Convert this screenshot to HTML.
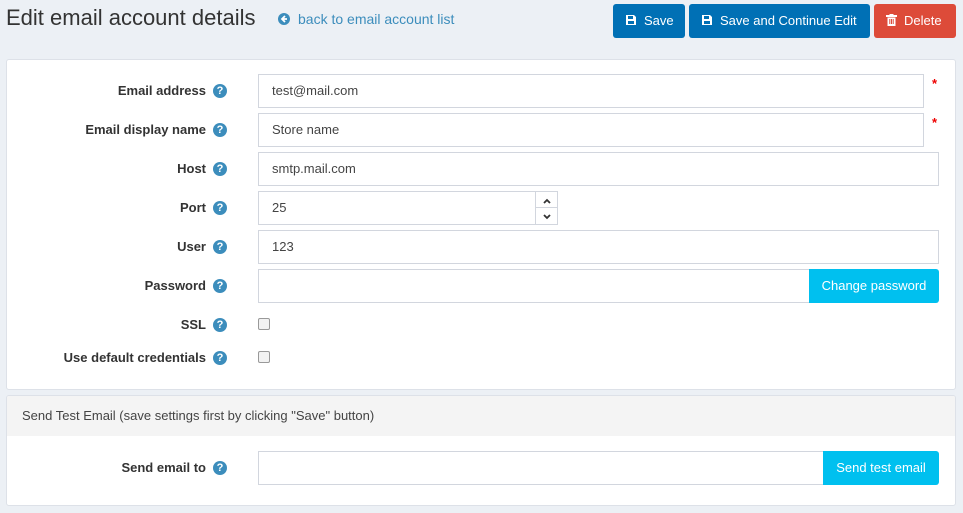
<!DOCTYPE html>
<html><head><meta charset="utf-8"><style>
*{box-sizing:border-box}
body{margin:0;width:963px;height:513px;background:#ecf0f5;font-family:"Liberation Sans",sans-serif;color:#333;position:relative;overflow:hidden}
.abs{position:absolute}
.title{left:6px;top:5px;font-size:22px;color:#333;white-space:nowrap}
.back{left:278px;top:11px;font-size:14px;color:#3c8dbc;white-space:nowrap}
.back .ic{display:inline-block;width:12px;height:12px;border-radius:50%;background:#3c8dbc;vertical-align:-1px;margin-right:8px;position:relative}
.btn{top:4px;height:34px;border-radius:3px;color:#fff;font-size:13px;line-height:34px;white-space:nowrap;padding-left:12px}
.blue{background:#0070b5}
.red{background:#dd4b39}
.panel{background:#fff;border-radius:3px;border:1px solid #dde1e8}
.lbl{right:757px;font-size:13px;font-weight:bold;color:#333;text-align:right;white-space:nowrap;line-height:16px}
.help{left:213px;width:14px;height:14px;border-radius:50%;background:#3c8dbc;color:#fff;font-size:11px;font-weight:bold;text-align:center;line-height:14px}
.inp{left:258px;height:34px;border:1px solid #d2d6de;background:#fff;font-size:13px;line-height:32px;padding-left:13px;color:#444}
.star{left:932px;color:#e00;font-size:13px;font-weight:bold}
.cb{left:258px;width:12px;height:12px;border:1px solid #999;border-radius:2px;background:#f2f2f2}
.cyan{background:#00c0ef;color:#fff;font-size:13px;text-align:center;line-height:34px;height:34px;border-radius:0 3px 3px 0}
</style></head><body>
<div class="abs title">Edit email account details</div>
<div class="abs back"><span class="ic"><svg width="12" height="12" viewBox="0 0 12 12" style="position:absolute;left:0;top:0"><path d="M7 3 L4 6 L7 9 M4 6 H9" stroke="#fff" stroke-width="1.8" fill="none"/></svg></span>back to email account list</div>
<div class="abs btn blue" style="left:613px;width:72px"><svg width="12" height="12" viewBox="0 0 12 12" style="vertical-align:-1px;margin-right:7px"><path d="M1 1H9L11 3V11H1Z" fill="#fff"/><rect x="3" y="2" width="5" height="3" fill="#0070b5"/><rect x="3" y="7" width="6" height="3" fill="#0070b5"/></svg>Save</div>
<div class="abs btn blue" style="left:689px;width:181px"><svg width="12" height="12" viewBox="0 0 12 12" style="vertical-align:-1px;margin-right:7px"><path d="M1 1H9L11 3V11H1Z" fill="#fff"/><rect x="3" y="2" width="5" height="3" fill="#0070b5"/><rect x="3" y="7" width="6" height="3" fill="#0070b5"/></svg>Save and Continue Edit</div>
<div class="abs btn red" style="left:874px;width:82px"><svg width="11" height="12" viewBox="0 0 11 12" style="vertical-align:-1px;margin-right:7px"><rect x="0" y="1" width="11" height="2" fill="#fff"/><rect x="3.5" y="0" width="4" height="2" fill="#fff"/><path d="M1.5 3.5H9.5V12H1.5Z" fill="#fff"/><rect x="3.3" y="5" width="1" height="5" fill="#dd4b39"/><rect x="5" y="5" width="1" height="5" fill="#dd4b39"/><rect x="6.7" y="5" width="1" height="5" fill="#dd4b39"/></svg>Delete</div>

<div class="abs panel" style="left:6px;top:59px;width:950px;height:331px"></div>
<div class="abs panel" style="left:6px;top:395px;width:950px;height:111px;overflow:hidden"><div style="background:#f4f4f4;height:40px;font-size:13px;line-height:40px;padding-left:15px;color:#444">Send Test Email (save settings first by clicking "Save" button)</div></div>

<div class="abs lbl" style="top:83px">Email address</div><div class="abs help" style="top:84px">?</div>
<div class="abs inp" style="top:74px;width:666px">test@mail.com</div><div class="abs star" style="top:76px">*</div>
<div class="abs lbl" style="top:122px">Email display name</div><div class="abs help" style="top:123px">?</div>
<div class="abs inp" style="top:113px;width:666px">Store name</div><div class="abs star" style="top:115px">*</div>
<div class="abs lbl" style="top:161px">Host</div><div class="abs help" style="top:162px">?</div>
<div class="abs inp" style="top:152px;width:681px">smtp.mail.com</div>
<div class="abs lbl" style="top:200px">Port</div><div class="abs help" style="top:201px">?</div>
<div class="abs inp" style="top:191px;width:278px">25</div>
<div class="abs" style="left:535px;top:191px;width:23px;height:34px;border:1px solid #d2d6de;background:#fff"><div style="height:16px;border-bottom:1px solid #d2d6de;text-align:center"><svg width="10" height="8" viewBox="0 0 10 8"><path d="M2 6L5 3L8 6" stroke="#333" stroke-width="1.8" fill="none"/></svg></div><div style="text-align:center"><svg width="10" height="8" viewBox="0 0 10 8"><path d="M2 2L5 5L8 2" stroke="#333" stroke-width="1.8" fill="none"/></svg></div></div>
<div class="abs lbl" style="top:239px">User</div><div class="abs help" style="top:240px">?</div>
<div class="abs inp" style="top:230px;width:681px">123</div>
<div class="abs lbl" style="top:278px">Password</div><div class="abs help" style="top:279px">?</div>
<div class="abs inp" style="top:269px;width:552px"></div>
<div class="abs cyan" style="left:809px;top:269px;width:130px">Change password</div>
<div class="abs lbl" style="top:317px">SSL</div><div class="abs help" style="top:318px">?</div>
<div class="abs cb" style="top:318px"></div>
<div class="abs lbl" style="top:350px">Use default credentials</div><div class="abs help" style="top:351px">?</div>
<div class="abs cb" style="top:351px"></div>
<div class="abs lbl" style="top:460px">Send email to</div><div class="abs help" style="top:461px">?</div>
<div class="abs inp" style="top:451px;width:566px"></div>
<div class="abs cyan" style="left:823px;top:451px;width:116px">Send test email</div>
</body></html>
